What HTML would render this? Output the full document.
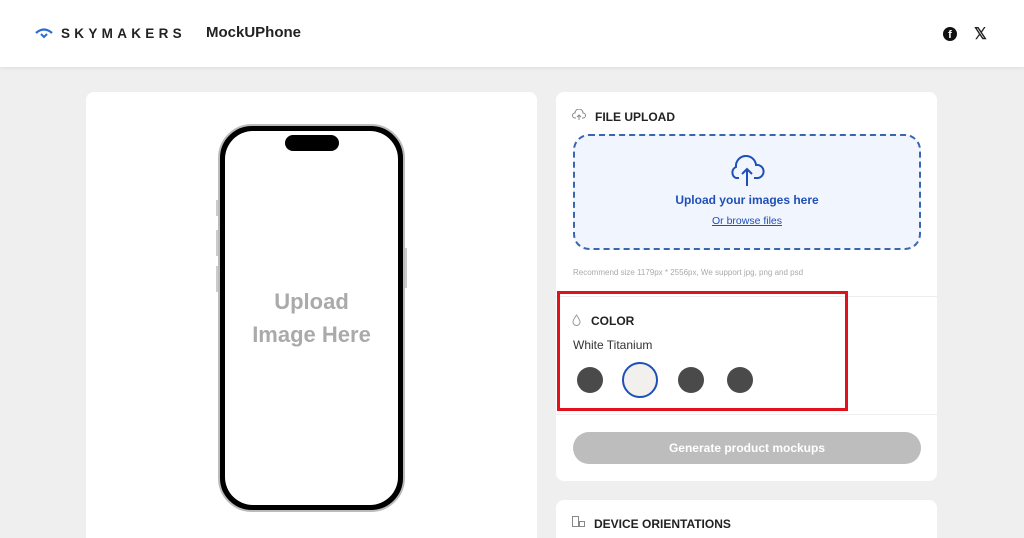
<!DOCTYPE html>
<html><head><style>
*{margin:0;padding:0;box-sizing:border-box}
html,body{width:1024px;height:538px;overflow:hidden}
body{background:#efefef;font-family:"Liberation Sans",sans-serif;position:relative}
.hdr{position:absolute;left:0;top:0;width:1024px;height:67px;background:#fff;box-shadow:0 1px 4px rgba(0,0,0,.08)}
.abs{position:absolute}
.card{position:absolute;background:#fff;border-radius:8px}
.h{font-weight:bold;font-size:12px;color:#222}
</style></head><body>
<div class="hdr">
<svg class="abs" style="left:34px;top:27px" width="20" height="12" viewBox="0 0 20 12"><path d="M2 6 Q10 -1 18 6" stroke="#2a6ad4" stroke-width="2.2" fill="none"/><path d="M7 7 L10 10 L13 7" stroke="#2a6ad4" stroke-width="2" fill="none"/></svg>
<div class="abs" style="left:61px;top:26px;font-size:13.5px;letter-spacing:4.3px;color:#222;font-weight:bold">SKYMAKERS</div>
<div class="abs" style="left:206px;top:24px;font-size:15px;font-weight:bold;color:#222">MockUPhone</div>
<div class="abs" style="left:943px;top:27px;width:14px;height:14px;border-radius:50%;background:#111;color:#fff;font-size:11px;font-weight:bold;text-align:center;line-height:16px">f</div>
<div class="abs" style="left:974px;top:24px;font-size:16px;font-weight:bold;color:#222">𝕏</div>
</div>
<div class="card" style="left:86px;top:92px;width:451px;height:460px"></div>
<div class="abs" style="left:218px;top:124px;width:187px;height:388px;border-radius:34px;border:2px solid #bbb;background:#000;padding:5px">
<div style="width:100%;height:100%;background:#fff;border-radius:28px"></div></div>
<div class="abs" style="left:285px;top:135px;width:54px;height:16px;border-radius:8px;background:#000"></div>
<div class="abs" style="left:216px;top:200px;width:2px;height:16px;background:#ccc"></div>
<div class="abs" style="left:216px;top:230px;width:2px;height:26px;background:#ccc"></div>
<div class="abs" style="left:216px;top:266px;width:2px;height:26px;background:#ccc"></div>
<div class="abs" style="left:405px;top:248px;width:2px;height:40px;background:#ccc"></div>
<div class="abs" style="left:218px;top:285px;width:187px;text-align:center;font-size:22px;font-weight:bold;color:#aaa;line-height:33px">Upload<br>Image Here</div>

<div class="card" style="left:556px;top:92px;width:381px;height:389px"></div>
<svg class="abs" style="left:572px;top:109px" width="14" height="12" viewBox="0 0 14 12"><path d="M4 9 H3 A2.5 2.5 0 0 1 3 4 A4 4 0 0 1 11 4 A2.5 2.5 0 0 1 11 9 H10 M7 11 V6 M5 8 L7 6 L9 8" stroke="#888" fill="none" stroke-width="1"/></svg>
<div class="abs h" style="left:595px;top:110px">FILE UPLOAD</div>
<div class="abs" style="left:573px;top:134px;width:348px;height:116px;border:2px dashed #3a66b0;border-radius:16px;background:#f1f5fd"></div>
<svg class="abs" style="left:727px;top:154px" width="40" height="32" viewBox="0 0 40 32"><path d="M12 24 H9 A6 6 0 0 1 9 13 A10 10 0 0 1 29 11 A6.5 6.5 0 0 1 31 24 H27 M20 32 V15 M15 20 L20 15 L25 20" stroke="#1f4fb8" fill="none" stroke-width="2"/></svg>
<div class="abs" style="left:573px;top:193px;width:348px;text-align:center;font-size:12px;font-weight:bold;color:#1f4fb8">Upload your images here</div>
<div class="abs" style="left:573px;top:215px;width:348px;text-align:center;font-size:10.5px;color:#1f4fb8;text-decoration:underline">Or browse files</div>
<div class="abs" style="left:573px;top:268px;font-size:8px;color:#aaa">Recommend size 1179px * 2556px, We support jpg, png and psd</div>
<div class="abs" style="left:556px;top:296px;width:381px;height:1px;background:#eee"></div>
<div class="abs" style="left:556px;top:414px;width:381px;height:1px;background:#eee"></div>
<svg class="abs" style="left:572px;top:314px" width="9" height="12" viewBox="0 0 9 12"><path d="M4.5 1 Q1 6 1 8 A3.5 3.5 0 0 0 8 8 Q8 6 4.5 1Z" stroke="#999" fill="none" stroke-width="1"/></svg>
<div class="abs h" style="left:591px;top:314px">COLOR</div>
<div class="abs" style="left:573px;top:338px;font-size:12px;color:#333">White Titanium</div>
<div class="abs" style="left:577px;top:367px;width:26px;height:26px;border-radius:50%;background:#4a4a4a"></div>
<div class="abs" style="left:622px;top:362px;width:36px;height:36px;border-radius:50%;border:2px solid #1f4fb8;background:#f1f0ec"></div>
<div class="abs" style="left:678px;top:367px;width:26px;height:26px;border-radius:50%;background:#4a4a4a"></div>
<div class="abs" style="left:727px;top:367px;width:26px;height:26px;border-radius:50%;background:#4a4a4a"></div>
<div class="abs" style="left:557px;top:291px;width:291px;height:120px;border:3px solid #e0121b"></div>
<div class="abs" style="left:573px;top:432px;width:348px;height:32px;border-radius:16px;background:#bdbdbd;color:#fff;font-weight:bold;font-size:12px;text-align:center;line-height:32px">Generate product mockups</div>

<div class="card" style="left:556px;top:500px;width:381px;height:60px"></div>
<svg class="abs" style="left:572px;top:516px" width="14" height="12" viewBox="0 0 14 12"><rect x="0.5" y="0.5" width="6" height="10" fill="none" stroke="#888"/><rect x="7.5" y="5.5" width="5" height="5" fill="none" stroke="#888"/></svg>
<div class="abs h" style="left:594px;top:517px">DEVICE ORIENTATIONS</div>
</body></html>
